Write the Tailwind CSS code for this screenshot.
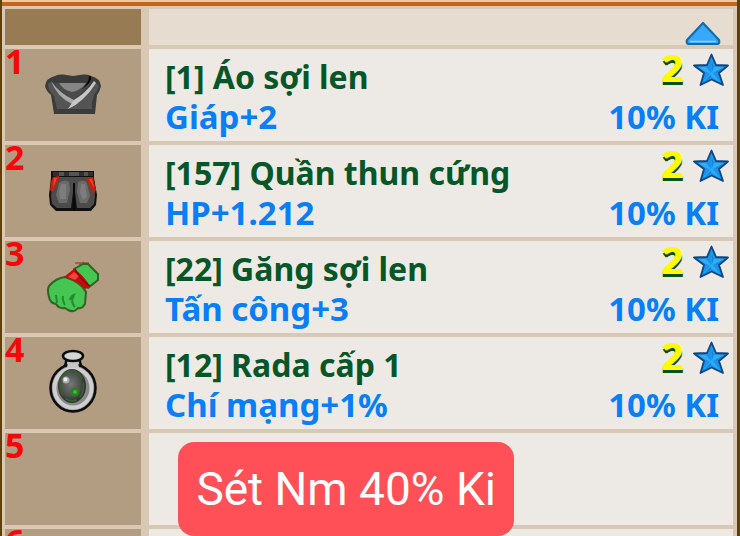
<!DOCTYPE html>
<html lang="vi">
    <head>
        <meta charset="UTF-8">
        <meta name="viewport" content="width=device-width, initial-scale=1.0">
        <script src="https://cdn.jsdelivr.net/npm/@tailwindcss/browser@4"></script>
        <title>Sét Nm 40% Ki</title>
    </head>
    <body class="h-screen overflow-hidden bg-[#d9c8b3]">
        <!-- star shared by all the rows -->
        <svg class="hidden">
            <symbol id="star" viewBox="0 0 36 34">
                <path d="M18.500 1.500 L23 12 L35 12.500 L26 20 L30 32 L18.500 26.500 L7.500 32 L11 20 L1 12.500 L14 12 Z" fill="#1b93e8" stroke="#0f4683" stroke-width="1.800" stroke-linejoin="round"/>
                <path d="M18.500 5 L18 20 L13 14 L5 14 L17 21 L10 29 L18.500 23.500 L27 29.500 L20.500 20.500 L31 14 L21.500 14 Z" fill="#2fadf8"/>
                <path d="M18.500 6 L18.500 20 L21 14 Z M30 14.500 L20 20 L24 19.500 Z M11 28.500 L18 21.500 L18.500 24 Z" fill="#1287dc"/>
            </symbol>
        </svg>

        <main class="relative h-screen overflow-hidden border-l-2 border-r-3 border-[#5e400b] font-['Noto_Sans',sans-serif] text-[33px] leading-10 font-bold">
            <div class="h-1.5 border-t-2 border-[#ecc9a4] bg-[#c4651b]"></div>
            <div class="mt-[3px] mr-1 ml-[3px] flex flex-col gap-1">
                <div class="grid h-9 grid-cols-[136px_1fr] gap-2">
                    <div class="bg-[#977b53]"></div>
                    <div class="flex items-end justify-end bg-[#e6ddd0] pr-3">
                        <button type="button" aria-label="Lên">
                            <svg class="block h-6 w-9" viewBox="0 0 36 24">
                                <path d="M18 2 L34 19 Q35 23 32 23 L4 23 Q1 23 2 19 Z" fill="#38a8fb" stroke="#176ca8" stroke-width="2.200" stroke-linejoin="round"/>
                                <path d="M5 20.500 L31 20.500" stroke="#8fd0fb" stroke-width="1.500"/>
                            </svg>
                        </button>
                    </div>
                </div>

                <div class="grid h-23 grid-cols-[136px_1fr] gap-2">
                    <div class="relative flex items-center justify-center bg-[#b39d82]">
                        <span class="absolute top-0 left-0 text-[34px] leading-6 text-[#f70808]">1</span>
                        <svg class="h-11 w-14" viewBox="0 0 56 44">
                            <path d="M10 3 Q12 1 18 1.500 L28 3 L38 1.500 Q44 1 46 3 Q55 5 56 13 Q55 18 52 22 L50 41 L9 41 L6 22 Q1 18 0 13 Q1 5 10 3 Z" fill="#3b3b3b"/>
                            <path d="M3 11 Q5 8 8 10 Q18 22 28 27 Q40 20 50 9 L54 13 Q52 19 49 22 L47 30 L47 36 L12 36 L9 23 Q3 18 3 11 Z" fill="#545454"/>
                            <path d="M9 10 L46 10 Q38 20 29 26 Q17 22 9 10 Z" fill="#4b4b4b"/>
                            <path d="M14 10 L41 10 Q35 18 27 19 Q18 17 14 10 Z" fill="#858585"/>
                            <path d="M6 8 Q14 20 29 27 L33 30 L23 36 L27 31 Q12 24 6 8 Z" fill="#a8a8a8"/>
                            <path d="M23 36 Q39 29 51 10 L49 8 Q41 20 29 27 Z" fill="#c6c6c6"/>
                            <path d="M46 3 Q48 9 36 17 Q44 10 44 3 Z" fill="#080808"/>
                        </svg>
                    </div>
                    <div class="flex justify-between bg-[#edeae5] pt-2 pr-3.5 pl-4">
                        <div>
                            <p class="text-[32px] text-[#06562a]">[1] Áo sợi len</p>
                            <p class="text-[#087ff7]">Giáp+2</p>
                        </div>
                        <div class="text-right text-[#087ff7]">
                            <div class="-mt-1 -mr-2.5 flex h-11 justify-end gap-2.5">
                                <span class="text-[38px] leading-7 text-[#fffb00] [text-shadow:1px_0_#fffb00,0_3px_#0c4d1b,1px_3px_#0c4d1b]">2</span>
                                <svg class="h-8.5 w-9"><use href="#star"/></svg>
                            </div>
                            <p>10% KI</p>
                        </div>
                    </div>
                </div>

                <div class="grid h-23 grid-cols-[136px_1fr] gap-2">
                    <div class="relative flex items-center justify-center bg-[#b39d82]">
                        <span class="absolute top-0 left-0 text-[34px] leading-6 text-[#f70808]">2</span>
                        <svg class="h-10.5 w-12" viewBox="0 0 48 42">
                            <path d="M2 1 L45 1 L45 8 L48 25 L47 35 L42 41 L7 41 L1 35 L0 25 L2 8 Z" fill="#101010"/>
                            <path d="M4 7 H44 L46 26 L45 34 L41 38 L28 38 L25 14 L22 38 L8 38 L3 34 L2 26 Z" fill="#4c4c4c"/>
                            <path d="M10 13 Q14 9 20 12 L21 20 L18 33 L10 33 L7 25 Z M29 12 Q35 9 38 13 L41 26 L38 33 L31 33 L28 22 Z" fill="#6b6b6b"/>
                            <path d="M12 14 H17 L17 29 H11 L10 22 Z M32 14 H36 L38 27 L34 30 L31 23 Z" fill="#7d7d7d"/>
                            <path d="M4 2 H44 V6 H4 Z" fill="#303030"/>
                            <path d="M10 2 H15 V6 H10 Z M20 2 H30 V6 H20 Z M35 2 H39 V6 H35 Z" fill="#555"/>
                            <path d="M25 13 V41" stroke="#080808" stroke-width="2"/>
                            <path d="M4 7 L10 6 Q10 13 3 22 L1 20 L2 12 Z M38 7 L44 7 L47 20 L45 24 Q39 17 38 7 Z" fill="#c5200e"/>
                            <path d="M5 8 H8 L4 18 Z M40 9 H43 L45 18 Z" fill="#f34229"/>
                        </svg>
                    </div>
                    <div class="flex justify-between bg-[#edeae5] pt-2 pr-3.5 pl-4">
                        <div>
                            <p class="text-[32px] text-[#06562a]">[157] Quần thun cứng</p>
                            <p class="text-[#087ff7]">HP+1.212</p>
                        </div>
                        <div class="text-right text-[#087ff7]">
                            <div class="-mt-1 -mr-2.5 flex h-11 justify-end gap-2.5">
                                <span class="text-[38px] leading-7 text-[#fffb00] [text-shadow:1px_0_#fffb00,0_3px_#0c4d1b,1px_3px_#0c4d1b]">2</span>
                                <svg class="h-8.5 w-9"><use href="#star"/></svg>
                            </div>
                            <p>10% KI</p>
                        </div>
                    </div>
                </div>

                <div class="grid h-23 grid-cols-[136px_1fr] gap-2">
                    <div class="relative flex items-center justify-center bg-[#b39d82]">
                        <span class="absolute top-0 left-0 text-[34px] leading-6 text-[#f70808]">3</span>
                        <svg class="h-13 w-13" viewBox="0 0 52 52">
                            <path d="M28 2 H42 M32 4 L37 1" stroke="#9b5638" stroke-width="1.500"/>
                            <path d="M27 8 L36 3 L41 3 L51 13 L51 19 L41 27 Z" fill="#45c653" stroke="#316323" stroke-width="2" stroke-linejoin="round"/>
                            <path d="M2 25 Q9 17 18 16 Q34 21 39 31 L38 43 Q35 48 31 47 Q27 52 21 49 L18 47 Q12 48 9 43 Q3 42 2 36 Q0 29 2 25 Z" fill="#45c653" stroke="#316323" stroke-width="2" stroke-linejoin="round"/>
                            <path d="M9 34 L10 42 M16 35 Q15 39 18 44 M28 46 Q23 41 27 34 Q24 35 23 39" fill="none" stroke="#238b33" stroke-width="2"/>
                            <path d="M17 16 L27 8 Q38 15 43 26 L38 28 Q31 20 17 16 Z" fill="#c40c0c"/>
                            <path d="M21 16 L27 11 L32 15 L28 19 Z" fill="#f5423b"/>
                            <path d="M28 8 Q33 18 43 25" fill="none" stroke="#840808" stroke-width="1.500"/>
                        </svg>
                    </div>
                    <div class="flex justify-between bg-[#edeae5] pt-2 pr-3.5 pl-4">
                        <div>
                            <p class="text-[32px] text-[#06562a]">[22] Găng sợi len</p>
                            <p class="text-[#087ff7]">Tấn công+3</p>
                        </div>
                        <div class="text-right text-[#087ff7]">
                            <div class="-mt-1 -mr-2.5 flex h-11 justify-end gap-2.5">
                                <span class="text-[38px] leading-7 text-[#fffb00] [text-shadow:1px_0_#fffb00,0_3px_#0c4d1b,1px_3px_#0c4d1b]">2</span>
                                <svg class="h-8.5 w-9"><use href="#star"/></svg>
                            </div>
                            <p>10% KI</p>
                        </div>
                    </div>
                </div>

                <div class="grid h-23 grid-cols-[136px_1fr] gap-2">
                    <div class="relative flex items-start justify-center bg-[#b39d82] pt-3">
                        <span class="absolute top-0 left-0 text-[34px] leading-6 text-[#f70808]">4</span>
                        <svg class="h-16 w-12" viewBox="0 0 48 64">
                            <defs>
                                <radialGradient id="glass" cx="45%" cy="45%">
                                    <stop offset="0" stop-color="#777"/>
                                    <stop offset="0.700" stop-color="#4b514a"/>
                                    <stop offset="1" stop-color="#333"/>
                                </radialGradient>
                            </defs>
                            <path d="M18 9 L30 9 L32 17 L16 17 Z" fill="#b4b4b4" stroke="#0c0c0c" stroke-width="2.500"/>
                            <ellipse cx="24" cy="39" rx="22.500" ry="23.500" fill="#888" stroke="#0c0c0c" stroke-width="2.500"/>
                            <ellipse cx="24" cy="39" rx="18.500" ry="19.500" fill="none" stroke="#cfcfcf" stroke-width="4"/>
                            <path d="M19 12 H29 L30 19 H18 Z" fill="#c6c6c6"/>
                            <ellipse cx="24" cy="7" rx="10" ry="5" fill="#d5d5d5" stroke="#0c0c0c" stroke-width="2.500"/>
                            <ellipse cx="23" cy="37" rx="14" ry="17" fill="url(#glass)"/>
                            <ellipse cx="23" cy="37" rx="11.500" ry="15" fill="none" stroke="#35662a" stroke-width="1.500" stroke-dasharray="12 4"/>
                            <circle cx="26" cy="43" r="4.500" fill="#2f7d26"/>
                            <circle cx="26" cy="43" r="2" fill="#3fb832"/>
                            <circle cx="17" cy="31" r="3.500" fill="#aaa"/>
                            <circle cx="16.500" cy="30.500" r="2" fill="#eee"/>
                        </svg>
                    </div>
                    <div class="flex justify-between bg-[#edeae5] pt-2 pr-3.5 pl-4">
                        <div>
                            <p class="text-[32px] text-[#06562a]">[12] Rada cấp 1</p>
                            <p class="text-[#087ff7]">Chí mạng+1%</p>
                        </div>
                        <div class="text-right text-[#087ff7]">
                            <div class="-mt-1 -mr-2.5 flex h-11 justify-end gap-2.5">
                                <span class="text-[38px] leading-7 text-[#fffb00] [text-shadow:1px_0_#fffb00,0_3px_#0c4d1b,1px_3px_#0c4d1b]">2</span>
                                <svg class="h-8.5 w-9"><use href="#star"/></svg>
                            </div>
                            <p>10% KI</p>
                        </div>
                    </div>
                </div>

                <!-- empty slots -->
                <div class="grid h-23 grid-cols-[136px_1fr] gap-2">
                    <div class="relative bg-[#b39d82]">
                        <span class="absolute top-0 left-0 text-[34px] leading-6 text-[#f70808]">5</span>
                    </div>
                    <div class="bg-[#edeae5]"></div>
                </div>
                <div class="grid h-23 grid-cols-[136px_1fr] gap-2">
                    <div class="relative bg-[#b39d82]">
                        <span class="absolute top-0 left-0 text-[34px] leading-6 text-[#f70808]">6</span>
                    </div>
                    <div class="bg-[#edeae5]"></div>
                </div>
            </div>

            <div class="absolute bottom-0 left-[24%] rounded-2xl bg-[#ff5058] px-[18px] py-[19px] font-['Roboto',sans-serif] text-[46px] leading-14 font-normal whitespace-nowrap text-white">Sét Nm 40% Ki</div>
        </main>
    </body>
</html>
